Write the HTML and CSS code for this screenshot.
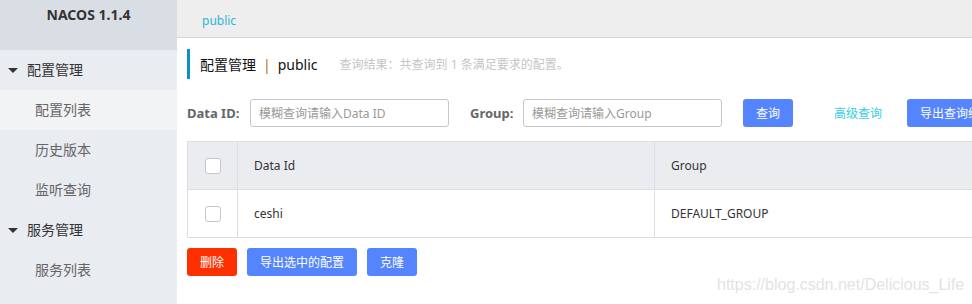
FILE: index.html
```html
<!DOCTYPE html>
<html lang="zh-CN">

<head>
    <meta charset="UTF-8">
    <title>Nacos 配置列表</title>
    <link rel="stylesheet" href="styles.css">
</head>

<body>
    <div class="layout">
        <aside class="sidebar">
            <div class="brand">NACOS 1.1.4</div>
            <div class="menu-group"><span class="caret"></span>配置管理</div>
            <div class="menu-item active">配置列表</div>
            <div class="menu-item">历史版本</div>
            <div class="menu-item">监听查询</div>
            <div class="menu-group"><span class="caret"></span>服务管理</div>
            <div class="menu-item">服务列表</div>
        </aside>

        <main class="main">
            <div class="namespace-bar">
                <span class="namespace">public</span>
            </div>

            <div class="content">
                <div class="page-title">
                    <span class="title-text">配置管理</span>
                    <span class="title-sep">|</span>
                    <span class="title-text">public</span>
                    <span class="title-result">查询结果：共查询到 1 条满足要求的配置。</span>
                </div>

                <div class="search-row">
                    <label class="search-label" for="dataId">Data ID:</label>
                    <input type="text" id="dataId" class="search-input" placeholder="模糊查询请输入Data ID">
                    <label class="search-label group-label" for="group">Group:</label>
                    <input type="text" id="group" class="search-input" placeholder="模糊查询请输入Group">
                    <button type="button" class="btn primary query-btn">查询</button>
                    <a class="link advanced">高级查询</a>
                    <button type="button" class="btn primary export-btn">导出查询结果</button>
                </div>

                <table class="config-table">
                    <thead>
                        <tr>
                            <th class="col-check"><span class="checkbox"></span></th>
                            <th class="col-id">Data Id</th>
                            <th class="col-group">Group</th>
                        </tr>
                    </thead>
                    <tbody>
                        <tr>
                            <td class="col-check"><span class="checkbox"></span></td>
                            <td class="col-id">ceshi</td>
                            <td class="col-group">DEFAULT_GROUP</td>
                        </tr>
                    </tbody>
                </table>

                <div class="batch-row">
                    <button type="button" class="btn danger">删除</button>
                    <button type="button" class="btn primary">导出选中的配置</button>
                    <button type="button" class="btn primary">克隆</button>
                </div>
            </div>

            <div class="watermark">https://blog.csdn.net/Delicious_Life</div>
        </main>
    </div>
</body>

</html>
```

FILE: styles.css
```css
body {
    margin: 0;
    font-family: "Noto Sans", "Noto Sans CJK SC", sans-serif;
    color: #333;
    background-color: #fff;
}

.layout {
    display: flex;
    width: 972px;
    height: 304px;
    overflow: hidden;
}

.sidebar {
    width: 177px;
    flex-shrink: 0;
    background-color: #e9ecf1;
}

.brand {
    height: 50px;
    background-color: #d9dde4;
    text-align: center;
    font-weight: bold;
    font-size: 14px;
    line-height: 30px;
    color: #333;
}

.menu-group,
.menu-item {
    height: 40px;
    line-height: 40px;
    font-size: 14px;
}

.menu-group {
    padding-left: 8px;
    color: #333;
}

.caret {
    display: inline-block;
    width: 0;
    height: 0;
    border-left: 5px solid transparent;
    border-right: 5px solid transparent;
    border-top: 5px solid #333;
    margin-right: 9px;
    vertical-align: middle;
    position: relative;
    top: -1px;
}

.menu-item {
    padding-left: 35px;
    color: #666;
}

.menu-item.active {
    background-color: #f2f3f5;
}

.main {
    flex: 1;
    min-width: 0;
    position: relative;
    overflow: hidden;
}

.namespace-bar {
    height: 38px;
    background-color: #eeeeee;
    border-bottom: 1px solid #d6d6d6;
    box-sizing: border-box;
    padding-left: 25px;
    line-height: 38px;
}

.namespace {
    font-size: 12px;
    color: #2cb5d4;
}

.content {
    padding: 11px 0 0 10px;
}

.page-title {
    display: flex;
    align-items: center;
    height: 30px;
    border-left: 3px solid #0b93c8;
    padding-left: 10px;
    white-space: nowrap;
}

.title-text {
    font-size: 14px;
    color: #111;
}

.title-sep {
    font-size: 14px;
    color: #b46a1b;
    margin: 0 7px;
}

.title-result {
    font-size: 12px;
    color: #c5c5c5;
    margin-left: 22px;
}

.search-row {
    display: flex;
    align-items: center;
    margin-top: 20px;
    height: 28px;
    white-space: nowrap;
}

.search-row > * {
    flex-shrink: 0;
}

.search-label {
    font-size: 13px;
    font-weight: bold;
    color: #666;
    width: 63px;
}

.group-label {
    margin-left: 21px;
    width: 53px;
}

.search-input {
    width: 199px;
    height: 28px;
    box-sizing: border-box;
    border: 1px solid #c4c6cf;
    border-radius: 3px;
    padding: 0 8px;
    font-family: inherit;
    font-size: 12px;
    color: #333;
}

.search-input::placeholder {
    color: #999;
}

.btn {
    height: 28px;
    padding: 0 13px;
    border: none;
    border-radius: 3px;
    font-family: inherit;
    font-size: 12px;
    color: #fff;
    cursor: pointer;
    flex-shrink: 0;
    white-space: nowrap;
}

.primary {
    background-color: #5584ff;
}

.danger {
    background-color: #ff3000;
}

.query-btn {
    margin-left: 21px;
    width: 50px;
    padding: 0;
}

.link {
    font-size: 12px;
    color: #33cde5;
}

.advanced {
    margin-left: 41px;
}

.export-btn {
    margin-left: 25px;
}

.config-table {
    margin-top: 14px;
    width: 1200px;
    border-collapse: collapse;
    font-size: 12px;
    color: #333;
}

.config-table th,
.config-table td {
    height: 47px;
    border: 1px solid #dcdee3;
    padding: 0 16px;
    text-align: left;
    font-weight: normal;
}

.config-table th {
    background-color: #ebecf0;
}

.col-check {
    width: 50px;
    box-sizing: border-box;
}

.config-table .col-check {
    padding: 0;
    text-align: center;
}

.col-id {
    width: 384px;
}

.checkbox {
    display: inline-block;
    width: 14px;
    height: 14px;
    border: 1px solid #c4c6cf;
    border-radius: 3px;
    background-color: #fff;
    vertical-align: middle;
}

.batch-row {
    display: flex;
    gap: 10px;
    margin-top: 10px;
}

.watermark {
    position: absolute;
    left: 540px;
    top: 276px;
    font-family: "Liberation Sans", Arial, sans-serif;
    font-size: 16px;
    color: #e3e3e3;
    white-space: nowrap;
}
```
